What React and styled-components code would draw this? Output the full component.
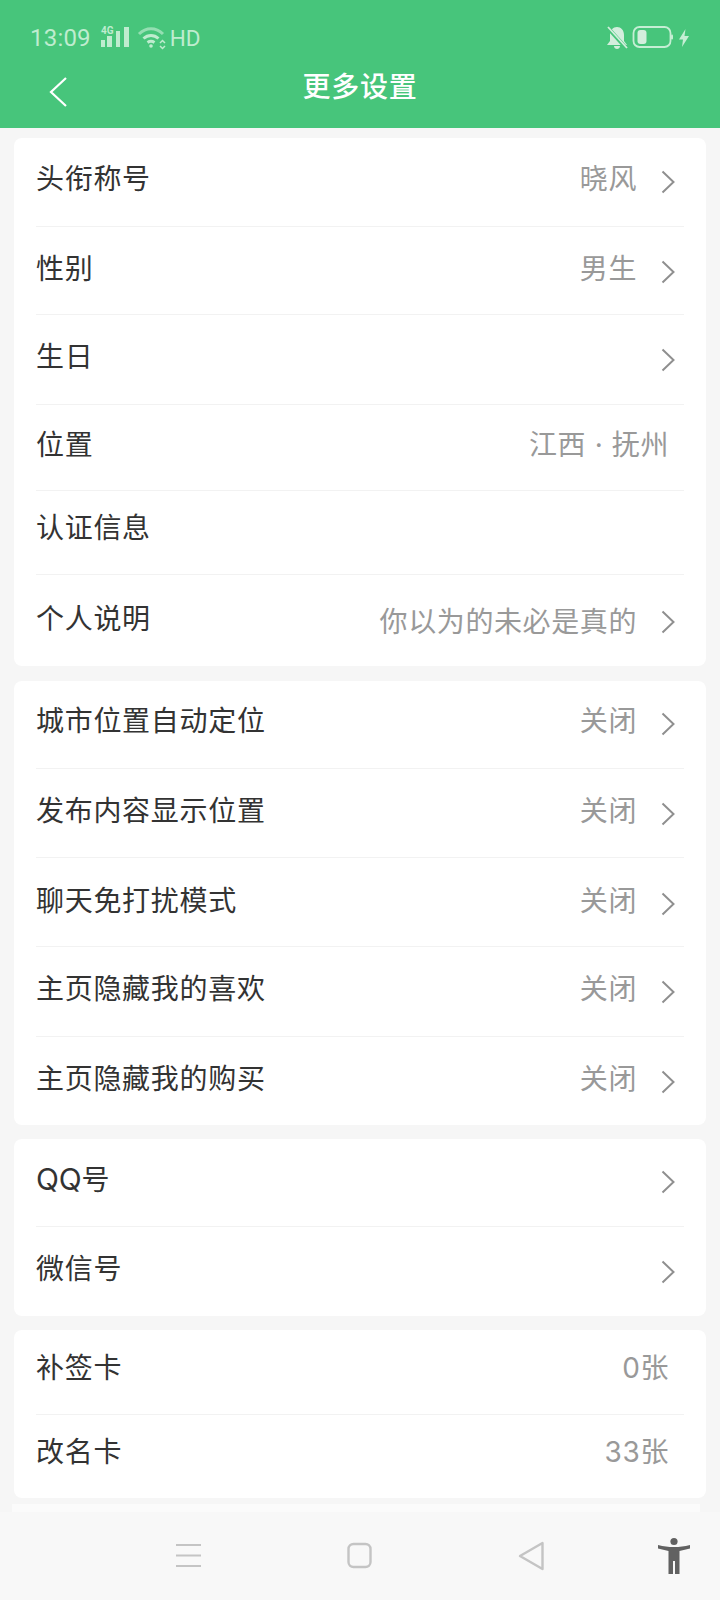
import React from "react";
import styled, { createGlobalStyle } from "styled-components";

const Global = createGlobalStyle`
  html, body { margin: 0; padding: 0; background: #f7f7f7; }
  * { box-sizing: border-box; }
`;
const Page = styled.div`
  width: 720px; height: 1600px; overflow: hidden; display: flex; flex-direction: column;
  background: #f6f6f6;
  font-family: "Inter", "Noto Sans CJK SC", sans-serif;
`;
const Header = styled.header`
  height: 128px; flex: none; background: #47c57b; color: #fff;
  display: flex; flex-direction: column;
`;
const StatusBar = styled.div`
  height: 52px; flex: none; padding: 23px 30px 0 30px; display: flex; align-items: center; justify-content: space-between;
  color: #bfeccf;
`;
const StatusGroup = styled.div`
  display: flex; align-items: center; gap: ${p => p.$gap || 5}px;
`;
const Time = styled.span`
  font-family: "Roboto", sans-serif; font-size: 24px; letter-spacing: .2px; line-height: 28px;
`;
const Hd = styled.span`
  font-family: "Roboto", sans-serif; font-size: 22.5px; line-height: 28px; margin-left: -2px;
`;
const SignalIcon = styled.svg`
  flex: none;
`;
const WifiIcon = styled.svg`
  flex: none; margin-left: 3px;
`;
const BatteryIcon = styled.svg`
  flex: none; margin-bottom: 2px;
`;
const TitleBar = styled.div`
  flex: 1; display: flex; align-items: center; justify-content: center; position: relative; padding-bottom: 6px;
`;
const Back = styled.svg`
  position: absolute; left: 48px; top: 24px;
`;
const Title = styled.h1`
  margin: 0; font-size: 28px; font-weight: 500; line-height: 40px; letter-spacing: .8px;
`;
const Content = styled.main`
  flex: 1; min-height: 0; padding: 10px 14px 0; display: flex; flex-direction: column; gap: 14px; overflow: hidden;
`;
const Card = styled.section`
  flex: none; background: #fff; border-radius: 8px; padding: 0 22px;
  margin-bottom: ${p => p.$mb || 0}px;
`;
const Row = styled.div`
  height: ${p => p.$h}px; display: flex; align-items: center; justify-content: space-between;
  padding-bottom: ${p => p.$pb}px;
  border-bottom: ${p => (p.$last ? "none" : "1px solid #f2f2f2")};
`;
const Label = styled.span`
  font-size: 28px; line-height: 40px; color: #333; letter-spacing: .7px;
`;
const Latin = styled.span`
  font-size: 30px; letter-spacing: -.2px;
`;
const Right = styled.div`
  display: flex; align-items: center;
`;
const Value = styled.span`
  font-size: 28px; line-height: 40px; color: #999; letter-spacing: .6px;
  padding-right: ${p => (p.$arrow ? 0 : 15)}px;
  padding-top: ${p => p.$pt || 0}px;
`;
const Chevron = styled.svg`
  margin-left: 24px; margin-right: 9px; margin-top: 6px; flex: none;
`;
const Sliver = styled.div`
  height: 8px; margin: -8px 6px 0 -2px; background: #fbfbfb; flex: none;
`;
const Nav = styled.nav`
  height: 88px; flex: none; background: #f8f8f8; padding-left: 175px;
  display: flex; align-items: flex-start;
`;
const NavIcon = styled.svg`
  flex: none; margin-top: ${p => p.$t}px; margin-left: ${p => p.$ml || 0}px;
`;

const Arrow = () => (
  <Chevron width="14" height="24" viewBox="0 0 14 24" fill="none" stroke="#8f8f8f" strokeWidth="2">
    <path d="M1.5 1.5 L12.5 12 L1.5 22.5" />
  </Chevron>
);

const groups = [
  {
    mb: 1,
    rows: [
      { l: "头衔称号", v: "晓风", a: 1, h: 89, pb: 6 },
      { l: "性别", v: "男生", a: 1, h: 88, pb: 3 },
      { l: "生日", a: 1, h: 90, pb: 5 },
      { l: "位置", v: "江西 · 抚州", h: 86, pb: 6 },
      { l: "认证信息", h: 84, pb: 9 },
      { l: "个人说明", v: "你以为的未必是真的", vt: 6, a: 1, h: 91, pb: 3 },
    ],
  },
  {
    rows: [
      { l: "城市位置自动定位", v: "关闭", a: 1, h: 88, pb: 7 },
      { l: "发布内容显示位置", v: "关闭", a: 1, h: 89, pb: 4 },
      { l: "聊天免打扰模式", v: "关闭", a: 1, h: 89, pb: 2 },
      { l: "主页隐藏我的喜欢", v: "关闭", a: 1, h: 90, pb: 6 },
      { l: "主页隐藏我的购买", v: "关闭", a: 1, h: 88, pb: 5 },
    ],
  },
  {
    rows: [
      { lat: "QQ", l: "号", a: 1, h: 88, pb: 7 },
      { l: "微信号", a: 1, h: 89, pb: 6 },
    ],
  },
  {
    rows: [
      { l: "补签卡", v: "0张", h: 85, pb: 9 },
      { l: "改名卡", v: "33张", h: 83, pb: 9 },
    ],
  },
];

export default function App() {
  return (
    <Page>
      <Global />
      <Header>
        <StatusBar>
          <StatusGroup>
            <Time>13:09</Time>
            <SignalIcon width="33" height="24" viewBox="0 0 33 24" fill="#bfeccf">
              <rect x="5" y="14" width="4" height="7" />
              <rect x="11" y="10" width="5" height="11" />
              <rect x="20" y="5" width="4" height="16" />
              <rect x="28" y="1" width="5" height="20" />
              <text x="5" y="8" fontSize="10" fontWeight="700" fontFamily="Roboto, sans-serif">4G</text>
            </SignalIcon>
            <WifiIcon width="30" height="24" viewBox="0 0 30 24" fill="none" stroke="#bfeccf" strokeWidth="3">
              <path d="M2 8 C9 1 19 1 26 8" opacity=".65" />
              <path d="M6.5 12.5 C11 8.5 17 8.5 21.5 12.5" />
              <path d="M10.5 16.5 C13 14.8 15 14.8 17.5 16.5" />
              <circle cx="14" cy="20" r="1.8" fill="#bfeccf" stroke="none" />
              <path d="M23 17 l2.5 -2.5 l2.5 2.5 M23 20 l2.5 2.5 l2.5 -2.5" strokeWidth="1.5" />
            </WifiIcon>
            <Hd>HD</Hd>
          </StatusGroup>
          <StatusGroup $gap={4}>
            <svg width="22" height="24" viewBox="0 0 22 24" fill="#d3eedd">
              <path d="M11 1 C15 1 18 4 18 9 V15 L21 19 H1 L4 15 V9 C4 4 7 1 11 1 Z" />
              <path d="M8 20 H14 C14 24 8 24 8 20 Z" />
              <path d="M2 2 L20 22" stroke="#47c57b" strokeWidth="4" />
              <path d="M2 1 L21 22" stroke="#d3eedd" strokeWidth="1.8" />
            </svg>
            <BatteryIcon width="42" height="22" viewBox="0 0 42 22" fill="none">
              <rect x="1.5" y="1" width="37" height="20" rx="6" stroke="#c5eed4" strokeWidth="1.8" />
              <rect x="5.5" y="4" width="9" height="14" rx="3" fill="#d3eedd" />
              <rect x="39" y="8.5" width="2" height="5" rx="1" fill="#c5eed4" />
            </BatteryIcon>
            <svg width="12" height="20" viewBox="0 0 12 20" fill="#c5eed4">
              <path d="M7.5 1 L1 11.5 H5 L4 19 L11 8 H6.5 Z" />
            </svg>
          </StatusGroup>
        </StatusBar>
        <TitleBar>
          <Back width="22" height="32" viewBox="0 0 22 32" fill="none" stroke="#fff" strokeWidth="2.2">
            <path d="M18 2 L3 16 L18 30" />
          </Back>
          <Title>更多设置</Title>
        </TitleBar>
      </Header>
      <Content>
        {groups.map((g, i) => (
          <Card key={i} $mb={g.mb}>
            {g.rows.map((r, j) => (
              <Row key={r.l} $h={r.h} $pb={r.pb} $last={j === g.rows.length - 1}>
                <Label>{r.lat && <Latin>{r.lat}</Latin>}{r.l}</Label>
                <Right>
                  {r.v && <Value $arrow={r.a} $pt={r.vt}>{r.v}</Value>}
                  {r.a ? <Arrow /> : null}
                </Right>
              </Row>
            ))}
          </Card>
        ))}
        <Sliver />
      </Content>
      <Nav>
        <NavIcon $t={30} width="26" height="26" viewBox="0 0 26 26" stroke="#c4c4c4" strokeWidth="2">
          <path d="M1 3 H26 M1 13.5 H26 M1 24 H26" />
        </NavIcon>
        <NavIcon $ml={145} $t={29} width="26" height="28" viewBox="0 0 26 28" fill="none" stroke="#c4c4c4" strokeWidth="2.4">
          <rect x="2.5" y="3" width="22" height="23" rx="5" />
        </NavIcon>
        <NavIcon $ml={145} $t={29} width="28" height="30" viewBox="0 0 28 30" fill="none" stroke="#c4c4c4" strokeWidth="2.4" strokeLinejoin="round">
          <path d="M3 15 L25.5 2 V28 Z" />
        </NavIcon>
        <NavIcon $ml={111} $t={25} width="36" height="38" viewBox="0 0 36 38" fill="#616161">
          <circle cx="18" cy="4.5" r="3.6" />
          <path d="M2 8 C8 9.5 12 10 18 10 C24 10 28 9.5 34 8 L34 11.5 L23.5 14 V37 H19 V24 H17 V37 H12.5 V14 L2 11.5 Z" />
        </NavIcon>
      </Nav>
    </Page>
  );
}
